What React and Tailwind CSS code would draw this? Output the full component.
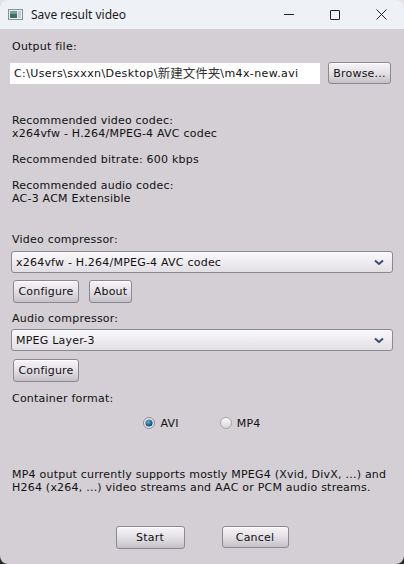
import React, { useState } from 'react';

const font = { fontFamily: '"DejaVu Sans", "Noto Sans CJK SC", sans-serif' };

const Button = ({ children, className = '' }) => (
  <button
    className={`flex items-center justify-center rounded-[3px] border border-[#8c8890] bg-linear-to-b from-[#f6f4f7] via-[#e4e1e6] to-[#c4c0c7] text-[11px] tracking-[0.2px] text-[#111] shadow-[inset_0_1px_0_#ffffff] ${className}`}
  >
    {children}
  </button>
);

const Combo = ({ value }) => (
  <div className="mx-[-1px] flex h-[22px] items-center justify-between rounded-[3px] border border-[#8c8890] bg-linear-to-b from-[#faf9fb] to-[#e2dfe4] pl-[4px] pr-[8px] text-[11px] text-[#111]">
    <span>{value}</span>
    <svg width="10" height="7" viewBox="0 0 10 7">
      <path d="M1 1.5 L5 5 L9 1.5" fill="none" stroke="#3b4878" strokeWidth="2" />
    </svg>
  </div>
);

const Radio = ({ checked, label, onClick }) => (
  <label className="flex cursor-default items-center gap-[5px]" onClick={onClick}>
    {checked ? (
      <svg width="12" height="12" viewBox="0 0 12 12">
        <defs>
          <radialGradient id="on" cx="40%" cy="35%" r="60%">
            <stop offset="0%" stopColor="#5fb4e0" />
            <stop offset="100%" stopColor="#10486e" />
          </radialGradient>
        </defs>
        <circle cx="6" cy="6" r="5.5" fill="#eceaee" stroke="#8c8890" />
        <circle cx="6" cy="6" r="3.6" fill="url(#on)" />
      </svg>
    ) : (
      <svg width="12" height="12" viewBox="0 0 12 12">
        <defs>
          <linearGradient id="off" x1="0" y1="0" x2="0" y2="1">
            <stop offset="0%" stopColor="#fbfbfc" />
            <stop offset="100%" stopColor="#d6d3d8" />
          </linearGradient>
        </defs>
        <circle cx="6" cy="6" r="5.5" fill="url(#off)" stroke="#a9a5ac" />
      </svg>
    )}
    <span>{label}</span>
  </label>
);

export default function App() {
  const [format, setFormat] = useState('avi');

  return (
    <div className="h-[564px] w-[404px] bg-linear-to-b from-[#e4e4e6] to-[#2a2a2a]">
      <div className="flex h-full flex-col overflow-hidden rounded-lg bg-[#d3cfd4]">
        {/* title bar */}
        <div className="flex h-[29px] shrink-0 items-center bg-[#eef2f7]">
          <svg className="ml-[8px]" width="15" height="11" viewBox="0 0 15 11">
            <rect x="0.5" y="0.5" width="14" height="10" fill="#e9edf0" stroke="#8a9196" />
            <rect x="2" y="2" width="7" height="7" fill="#3f6f66" />
            <rect x="2" y="2" width="7" height="3" fill="#6f9f96" />
            <rect x="10" y="2" width="3" height="7" fill="#c5cdd2" />
          </svg>
          <span className="ml-[8px] text-[12px] text-[#1a1a1a]" style={{ fontFamily: '"Noto Sans", sans-serif' }}>
            Save result video
          </span>
          <div className="ml-auto flex items-center">
            <div className="flex h-[29px] w-[46px] items-center justify-center">
              <div className="h-px w-[10px] bg-[#222]" />
            </div>
            <div className="flex h-[29px] w-[46px] items-center justify-center">
              <div className="h-[10px] w-[10px] rounded-[1px] border border-[#222]" />
            </div>
            <div className="flex h-[29px] w-[46px] items-center justify-center">
              <svg width="11" height="11" viewBox="0 0 11 11">
                <path d="M0.5 0.5 L10.5 10.5 M10.5 0.5 L0.5 10.5" stroke="#222" strokeWidth="1" />
              </svg>
            </div>
          </div>
        </div>

        {/* body */}
        <div className="flex flex-1 flex-col px-[12px] pt-[11px] text-[11px] leading-[13px] tracking-[0.22px] text-[#111]" style={font}>
          <div>Output file:</div>
          <div className="mt-[9px] ml-[-2px] flex items-center">
            <div className="flex h-[21px] w-[310px] items-center bg-white pl-[4px] tracking-[0.4px] whitespace-nowrap">
              C:\Users\sxxxn\Desktop\
              <span className="text-[12.5px] tracking-normal text-[#333]">新建文件夹</span>
              \m4x-new.avi
            </div>
            <Button className="ml-[8px] h-[22px] w-[63px]">Browse...</Button>
          </div>

          <div className="mt-[30px]">Recommended video codec:</div>
          <div>x264vfw - H.264/MPEG-4 AVC codec</div>
          <div className="mt-[13px]">Recommended bitrate: 600 kbps</div>
          <div className="mt-[13px]">Recommended audio codec:</div>
          <div>AC-3 ACM Extensible</div>

          <div className="mt-[28px]">Video compressor:</div>
          <div className="mt-[5px]">
            <Combo value="x264vfw - H.264/MPEG-4 AVC codec" />
          </div>
          <div className="mt-[7px] flex gap-[10px]">
            <Button className="ml-[1px] h-[23px] w-[66px]">Configure</Button>
            <Button className="h-[23px] w-[43px]">About</Button>
          </div>

          <div className="mt-[9px]">Audio compressor:</div>
          <div className="mt-[4px]">
            <Combo value="MPEG Layer-3" />
          </div>
          <div className="mt-[8px] flex">
            <Button className="ml-[1px] h-[23px] w-[66px]">Configure</Button>
          </div>

          <div className="mt-[10px]">Container format:</div>
          <div className="mt-[10px] flex h-[16px] items-center justify-center gap-[41px]">
            <Radio checked={format === 'avi'} label="AVI" onClick={() => setFormat('avi')} />
            <Radio checked={format === 'mp4'} label="MP4" onClick={() => setFormat('mp4')} />
          </div>

          <div className="mt-[37px]">
            MP4 output currently supports mostly MPEG4 (Xvid, DivX, ...) and
            <br />
            H264 (x264, ...) video streams and AAC or PCM audio streams.
          </div>

          <div className="mt-[32px] flex justify-center gap-[37px]">
            <Button className="h-[23px] w-[69px]">Start</Button>
            <Button className="h-[22px] w-[67px]">Cancel</Button>
          </div>
        </div>
      </div>
    </div>
  );
}
